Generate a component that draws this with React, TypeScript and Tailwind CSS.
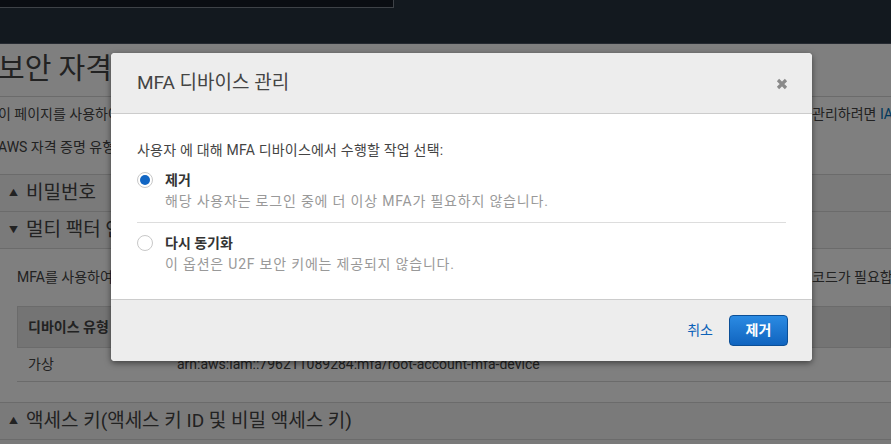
import React from "react";

const font = "font-['Roboto','Noto_Sans_CJK_KR',sans-serif]";

function SectionRow({ title, open }: { title: string; open?: boolean }) {
  return (
    <div className="flex h-[37px] items-center gap-[8px] border-t border-[#d6d6d6] bg-[#f4f4f4] pl-[9px] text-[19px] text-[#444]">
      <span className="text-[9px] leading-none text-[#444]">{open ? "▼" : "▲"}</span>
      <span className="whitespace-nowrap">{title}</span>
    </div>
  );
}

function Radio({ checked }: { checked?: boolean }) {
  return (
    <span className="flex h-[16px] w-[16px] shrink-0 items-center justify-center rounded-full border border-[#c8c8c8] bg-white">
      {checked && <span className="h-[10px] w-[10px] rounded-full bg-[#1166c4]" />}
    </span>
  );
}

function Option({
  label,
  note,
  checked,
}: {
  label: string;
  note: string;
  checked?: boolean;
}) {
  return (
    <div className="flex gap-[12px]">
      <div className="pt-[2px]">
        <Radio checked={checked} />
      </div>
      <div>
        <div className="text-[14px] font-bold leading-[20px] text-[#333]">{label}</div>
        <div className="text-[14px] leading-[22px] tracking-[0.8px] text-[#999]">{note}</div>
      </div>
    </div>
  );
}

export default function App() {
  return (
    <div className={`relative h-[444px] w-[891px] overflow-hidden bg-white ${font}`}>
      <div className="h-[44px] border-b border-[#4a5562] bg-[#26333f]">
        <div className="h-[8px] w-[394px] border-b border-r border-[#7c848e] bg-[#151b24]" />
      </div>

      <div className="-ml-[2px] text-[#444]">
        <h1 className="flex h-[53px] items-center border-b border-[#d6d6d6] text-[29px] font-normal whitespace-nowrap">
          보안 자격 증명
        </h1>
        <p className="flex h-[34px] items-center text-[14px] whitespace-nowrap">
          <span className="w-[814px] shrink-0 overflow-hidden">
            이 페이지를 사용하여 AWS 계정의 자격 증명을 관리합니다. AWS Identity and Access Management(IAM) 사용자의 자격 증명을
          </span>
          <span>
            관리하려면 <span className="text-[#0073bb]">IAM 콘솔</span>을 사용하십시오.
          </span>
        </p>
        <p className="flex h-[32px] items-center text-[14px] whitespace-nowrap">
          AWS 자격 증명 유형에 대한 자세한 내용은 AWS 일반 참조의 AWS 보안 자격 증명을 참조하십시오.
        </p>
      </div>

      <div className="mt-[11px]">
        <SectionRow title="비밀번호" />
        <SectionRow title="멀티 팩터 인증(MFA)" open />
        <div className="border-t border-[#d6d6d6] pl-[17px] pb-[20px]">
          <p className="flex h-[57px] items-center text-[14px] whitespace-nowrap text-[#444]">
            <span className="w-[795px] shrink-0 overflow-hidden">
              MFA를 사용하여 AWS 계정의 보안을 강화합니다. MFA 보호 계정에 로그인하려면 사용자 이름, 암호 및 AWS MFA 디바이스의 인증
            </span>
            <span>코드가 필요합니다.</span>
          </p>
          <div className="border-b border-[#d6d6d6] text-[14px] text-[#444]">
            <div className="flex h-[42px] items-center border border-[#d6d6d6] bg-[#e8e8e8] font-bold">
              <span className="w-[160px] pl-[10px]">디바이스 유형</span>
              <span>일련 번호</span>
            </div>
            <div className="flex h-[33px] items-center whitespace-nowrap">
              <span className="w-[160px] pl-[11px]">가상</span>
              <span>arn:aws:iam::796211089284:mfa/root-account-mfa-device</span>
            </div>
          </div>
        </div>
        <SectionRow title="액세스 키(액세스 키 ID 및 비밀 액세스 키)" />
        <div className="h-[37px] border-t border-[#d6d6d6] bg-[#f4f4f4]" />
      </div>

      <div className="absolute inset-0 bg-black/50" />

      <div className="absolute left-[111px] top-[53px] w-[701px] overflow-hidden rounded-[4px] bg-white shadow-[0_2px_6px_rgba(0,0,0,0.5)]">
        <div className="flex h-[61px] items-center justify-between border-b border-[#cccccc] bg-[#ededed] pl-[26px] pr-[24px]">
          <h2 className="pt-[1px] text-[19px] font-normal text-[#444]">MFA 디바이스 관리</h2>
          <svg width="12" height="12" viewBox="0 0 12 12" className="mt-[1px]">
            <path d="M2 2 L10 10 M10 2 L2 10" stroke="#8a8a8a" strokeWidth="3.2" strokeLinecap="butt" />
          </svg>
        </div>
        <div className="px-[26px] pt-[25px] pb-[24px]">
          <p className="text-[14px] leading-[22px] tracking-[0.2px] text-[#444]">
            사용자 에 대해 MFA 디바이스에서 수행할 작업 선택:
          </p>
          <div className="mt-[9px] border-b border-[#dddddd] pb-[10px]">
            <Option
              checked
              label="제거"
              note="해당 사용자는 로그인 중에 더 이상 MFA가 필요하지 않습니다."
            />
          </div>
          <div className="mt-[10px]">
            <Option label="다시 동기화" note="이 옵션은 U2F 보안 키에는 제공되지 않습니다." />
          </div>
        </div>
        <div className="flex h-[62px] items-center justify-end gap-[16px] border-t border-[#cccccc] bg-[#ededed] pr-[24px]">
          <button className="text-[14px] font-normal text-[#0d62b8]">취소</button>
          <button className="h-[31px] w-[59px] rounded-[4px] border border-[#0b4f97] bg-gradient-to-b from-[#2b8be3] to-[#1064bf] text-[14px] font-bold text-white">
            제거
          </button>
        </div>
      </div>
    </div>
  );
}
